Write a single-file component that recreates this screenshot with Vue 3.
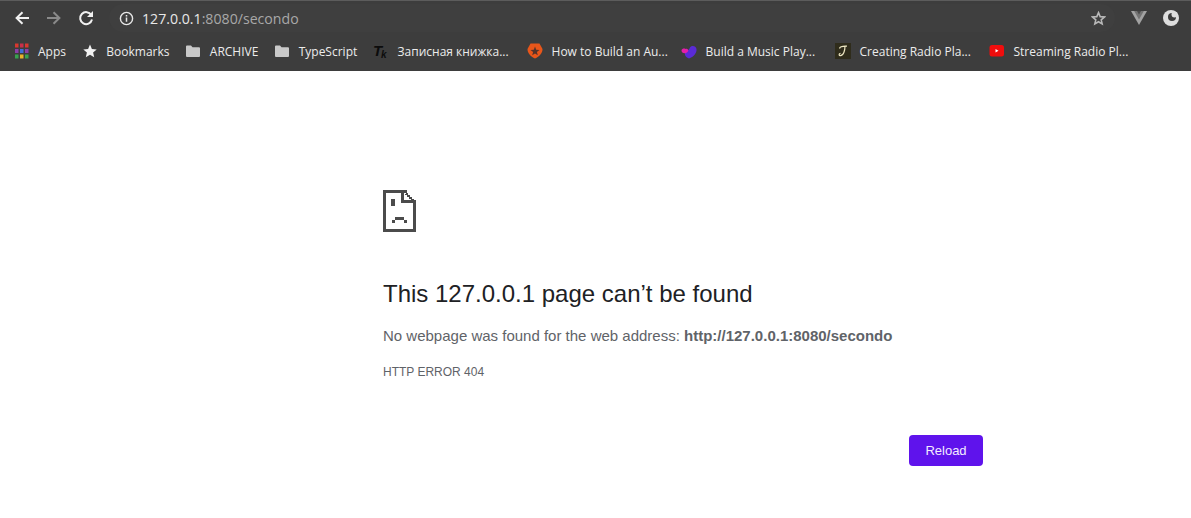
<template>
  <div class="browser">
    <div class="toolbar">
      <svg class="nav" viewBox="0 0 16 16" width="16" height="16"><path d="M15 8H3M8.500 2.200 2.600 8l5.900 5.800" fill="none" stroke="#f1f1f1" stroke-width="2"/></svg>
      <svg class="nav" viewBox="0 0 16 16" width="16" height="16"><path d="M1 8h12M7.500 2.200 13.400 8l-5.900 5.800" fill="none" stroke="#8a8a8a" stroke-width="2"/></svg>
      <svg class="nav" viewBox="0 0 16 16" width="16" height="16"><path d="M13.300 5A6 6 0 1 0 14 9.500" fill="none" stroke="#f1f1f1" stroke-width="2"/><path d="M15 1v6H9z" fill="#f1f1f1"/></svg>
      <div class="omnibox">
        <svg viewBox="0 0 16 16" width="15" height="15"><circle cx="8" cy="8" r="6.500" fill="none" stroke="#e8e8e8" stroke-width="1.500"/><path d="M7.200 7h1.600v4.500H7.200zM7.200 4.200h1.600v1.600H7.200z" fill="#e8e8e8"/></svg>
        <span class="url"><span class="host">127.0.0.1</span>:8080/secondo</span>
        <svg class="star" viewBox="0 0 16 16" width="15" height="15"><path d="M8 1.800 9.800 6l4.500.4-3.400 3 1 4.400L8 11.500l-3.900 2.300 1-4.400-3.400-3L6.200 6z" fill="none" stroke="#b8b8b8" stroke-width="1.700"/></svg>
      </div>
      <svg class="ext" viewBox="0 0 16 14" width="16" height="14"><path d="M0 0h16L8 14z" fill="#a2a2a2"/><path d="M3.200 0h9.600L8 8.500z" fill="#737373"/><path d="M6 0h4L8 3.500z" fill="#4a4a4a"/></svg>
      <svg class="ext" viewBox="0 0 16 16" width="16" height="16"><circle cx="8" cy="8" r="8" fill="#dedede"/><circle cx="9" cy="7" r="4" fill="#3c3c3c"/><circle cx="11.500" cy="4.500" r="3" fill="#dedede"/></svg>
    </div>
    <div class="bookmarks">
      <div v-for="b in bookmarks" :key="b.label" class="bookmark" :class="{ fixed: b.fixed }">
        <svg v-if="b.icon === 'apps'" viewBox="0 0 14 16" width="14" height="16" class="apps">
          <rect v-for="c in appCells" :key="c.k" :x="c.x" :y="c.y" width="3.500" height="4" :fill="c.fill" />
        </svg>
        <svg v-else-if="b.icon === 'star'" viewBox="0 0 16 16" width="16" height="16" class="icon"><path d="M8 1.500 9.900 6l4.800.4-3.600 3.100 1.100 4.700L8 11.700l-4.200 2.500 1.100-4.700-3.600-3.100L6.100 6z" fill="#f2f2f2"/></svg>
        <svg v-else-if="b.icon === 'folder'" viewBox="0 0 16 16" width="16" height="16" class="icon"><path d="M1 3.500A1 1 0 0 1 2 2.500h4l1.500 1.700H14a1 1 0 0 1 1 1V13a1 1 0 0 1-1 1H2a1 1 0 0 1-1-1z" fill="#c9c9c9"/></svg>
        <svg v-else-if="b.icon === 'tk'" viewBox="0 0 16 16" width="16" height="16" class="icon"><text x="0" y="12.500" class="tk">T</text><text x="8" y="14.500" class="tk small">k</text></svg>
        <svg v-else-if="b.icon === 'auth0'" viewBox="0 0 16 16" width="16" height="16" class="icon"><path d="M3.500 0.500h9L15.500 6c0 4.200-3 7.500-7.500 9.500C3.500 13.500.5 10.200.5 6z" fill="#e8561a"/><path d="M8 3.500 9.200 6.700l3.300.2-2.600 2.100.9 3.200L8 10.400l-2.800 1.800.9-3.200-2.600-2.100 3.300-.2z" fill="#55332a"/></svg>
        <svg v-else-if="b.icon === 'music'" viewBox="0 0 16 16" width="16" height="16" class="icon"><path d="M8 15.500C3.500 14 3 10 5 8c2-.5 3-1 4-3.500 2-2.500 6-1.500 6.500 1.500.5 4-3 8-7.500 9.500z" fill="#5a2bd6"/><path d="M.5 7.500c.3-2 3-2.500 4-1.500 1.500-.8 3.200.5 2.700 2-.6 1.700-2.700 2.300-3.700 2.300C2 10.300.3 9 .5 7.500z" fill="#e51ea9"/></svg>
        <svg v-else-if="b.icon === 'script'" viewBox="0 0 16 16" width="16" height="16" class="icon"><rect width="16" height="16" fill="#2f2c1b"/><path d="M4.500 5.500c.5-2 4-2.500 7.500-2.300M10 3.300C10 7.500 8.500 12.500 5.500 12.700 3.800 12.800 3.500 10.800 5.500 10.300" fill="none" stroke="#ece6c2" stroke-width="1.200"/></svg>
        <svg v-else-if="b.icon === 'yt'" viewBox="0 0 16 16" width="16" height="16" class="icon"><rect x="0.500" y="2" width="14.500" height="11.500" rx="2.500" fill="#f00d0d"/><path d="M6.500 6v3.600l3-1.800z" fill="#fff"/></svg>
        <span>{{ b.label }}</span>
      </div>
    </div>
    <main class="page">
      <svg class="sad" viewBox="0 0 33 42" width="33" height="42" shape-rendering="crispEdges">
        <path d="M0 0h24v3H3v36h27V12h3v30H0z" fill="#4b4b4b"/>
        <path d="M18 3h3v7h12v3H18z" fill="#4b4b4b"/>
        <path d="M23 3h2v2h2v2h2v2h2v2h2v2h-3v-2h-2V9h-2V7h-2V5h-2z" fill="#4b4b4b"/>
        <rect x="8" y="9" width="4" height="7" fill="#4b4b4b"/>
        <path d="M9 33v-3h3v-3h9v3h3v3h-3v-3h-9v3z" fill="#4b4b4b"/>
      </svg>
      <h1>This 127.0.0.1 page can’t be found</h1>
      <p class="msg">No webpage was found for the web address: <strong>http://127.0.0.1:8080/secondo</strong></p>
      <p class="code">HTTP ERROR 404</p>
      <div class="actions"><button>Reload</button></div>
    </main>
  </div>
</template>

<script setup>
const bookmarks = [
  { label: 'Apps', icon: 'apps' },
  { label: 'Bookmarks', icon: 'star' },
  { label: 'ARCHIVE', icon: 'folder' },
  { label: 'TypeScript', icon: 'folder' },
  { label: 'Записная книжка...', icon: 'tk', fixed: true },
  { label: 'How to Build an Au...', icon: 'auth0', fixed: true },
  { label: 'Build a Music Play...', icon: 'music', fixed: true },
  { label: 'Creating Radio Pla...', icon: 'script', fixed: true },
  { label: 'Streaming Radio Pl...', icon: 'yt', fixed: true }
]

const appColors = ['#d8382f', '#c9304a', '#d8382f', '#8a3fa8', '#3f6fd8', '#8a3fa8', '#37a34f', '#e8b32a', '#37a34f']
const appCells = appColors.map((fill, i) => ({
  k: i,
  x: (i % 3) * 5,
  y: Math.floor(i / 3) * 5.500 + 0.500,
  fill
}))
</script>

<style scoped>
.browser { width: 1191px; height: 518px; overflow: hidden; background: #fff; }
.toolbar {
  height: 35px;
  box-sizing: border-box;
  border-top: 1px solid #5c5c5c;
  background: #3d3d3d;
  display: flex;
  align-items: center;
  padding-left: 14px;
  padding-right: 12px;
}
.nav { margin-right: 16px; flex: none; }
.omnibox {
  flex: 1;
  height: 28px;
  display: flex;
  align-items: center;
  margin-left: -1px;
  padding: 0 9px 0 10px;
  border-radius: 14px;
  background: #3f3f3f;
  font: 14.150px "Open Sans", "Noto Sans", sans-serif;
  color: #a8a8a8;
}
.url { margin-left: 8px; }
.host { color: #e8e8e8; }
.star { margin-left: auto; }
.ext { margin-left: 16px; flex: none; }
.bookmarks {
  height: 36px;
  box-sizing: border-box;
  padding-bottom: 4px;
  background: #3d3d3d;
  display: flex;
  align-items: center;
  padding-left: 15px;
  gap: 17.300px;
  font: 12px "Open Sans", "Noto Sans", sans-serif;
  color: #ececec;
}
.bookmark { display: flex; align-items: center; gap: 7px; white-space: nowrap; }
.bookmark.fixed { width: 136.700px; flex: none; }
.icon { flex: none; margin: 0 1.500px 0 -1.500px; }
.apps { flex: none; margin-right: 2px; }
.tk { font: italic bold 15px "Liberation Sans", sans-serif; fill: #0c0c0c; }
.tk.small { font-size: 10px; }
.page {
  width: 600px;
  margin-left: 383px;
  padding-top: 119px;
  font-family: "Liberation Sans", Arial, sans-serif;
}
.sad { display: block; }
h1 {
  margin: 47px 0 0;
  font-size: 24px;
  font-weight: 400;
  line-height: 30px;
  color: #202124;
}
.msg { margin: 15px 0 0; font-size: 15px; line-height: 24px; color: #5f6368; }
.code { margin: 16px 0 0; font-size: 12px; line-height: 16px; color: #5f6368; }
.actions { display: flex; justify-content: flex-end; margin-top: 55px; }
button {
  width: 74px;
  height: 31px;
  border: 0;
  border-radius: 4px;
  background: #5f13ec;
  color: #f3ecff;
  font: 13px "Liberation Sans", Arial, sans-serif;
}
</style>
